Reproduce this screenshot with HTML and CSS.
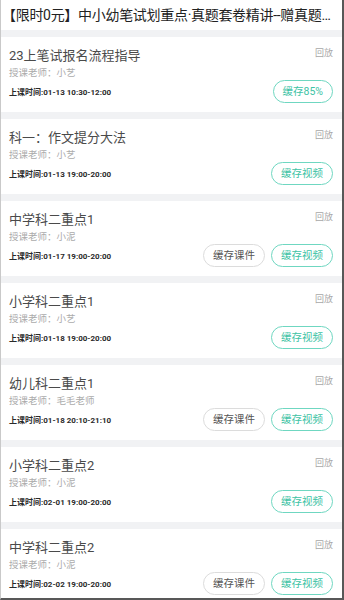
FILE: index.html
```html
<!DOCTYPE html>
<html lang="zh-CN">
<head>
<meta charset="utf-8">
<title>课程列表</title>
<link rel="stylesheet" href="styles.css">
</head>
<body>
<div class="frame">
  <header class="header">【限时0元】中小幼笔试划重点·真题套卷精讲--赠真题套卷电子版资料</header>
  <main class="list">
    <section class="card">
      <div class="top"><h2 class="title">23上笔试报名流程指导</h2><span class="tag">回放</span></div>
      <div class="teacher">授课老师：小艺</div>
      <div class="bottom"><span class="time">上课时间:01-13 10:30-12:00</span><div class="btns"><span class="btn btn-green">缓存85%</span></div></div>
    </section>
    <section class="card">
      <div class="top"><h2 class="title">科一：作文提分大法</h2><span class="tag">回放</span></div>
      <div class="teacher">授课老师：小艺</div>
      <div class="bottom"><span class="time">上课时间:01-13 19:00-20:00</span><div class="btns"><span class="btn btn-green">缓存视频</span></div></div>
    </section>
    <section class="card">
      <div class="top"><h2 class="title">中学科二重点1</h2><span class="tag">回放</span></div>
      <div class="teacher">授课老师：小泥</div>
      <div class="bottom"><span class="time">上课时间:01-17 19:00-20:00</span><div class="btns"><span class="btn btn-gray">缓存课件</span><span class="btn btn-green">缓存视频</span></div></div>
    </section>
    <section class="card">
      <div class="top"><h2 class="title">小学科二重点1</h2><span class="tag">回放</span></div>
      <div class="teacher">授课老师：小艺</div>
      <div class="bottom"><span class="time">上课时间:01-18 19:00-20:00</span><div class="btns"><span class="btn btn-green">缓存视频</span></div></div>
    </section>
    <section class="card">
      <div class="top"><h2 class="title">幼儿科二重点1</h2><span class="tag">回放</span></div>
      <div class="teacher">授课老师：毛毛老师</div>
      <div class="bottom"><span class="time">上课时间:01-18 20:10-21:10</span><div class="btns"><span class="btn btn-gray">缓存课件</span><span class="btn btn-green">缓存视频</span></div></div>
    </section>
    <section class="card">
      <div class="top"><h2 class="title">小学科二重点2</h2><span class="tag">回放</span></div>
      <div class="teacher">授课老师：小泥</div>
      <div class="bottom"><span class="time">上课时间:02-01 19:00-20:00</span><div class="btns"><span class="btn btn-green">缓存视频</span></div></div>
    </section>
    <section class="card">
      <div class="top"><h2 class="title">中学科二重点2</h2><span class="tag">回放</span></div>
      <div class="teacher">授课老师：小泥</div>
      <div class="bottom"><span class="time">上课时间:02-02 19:00-20:00</span><div class="btns"><span class="btn btn-gray">缓存课件</span><span class="btn btn-green">缓存视频</span></div></div>
    </section>
  </main>
</div>
</body>
</html>
```
FILE: styles.css
```css
* { box-sizing: border-box; }
html, body { margin: 0; padding: 0; }
body {
  font-family: Roboto, "Noto Sans CJK SC", sans-serif;
  background: #ffffff;
}
.frame {
  width: 344px;
  height: 600px;
  overflow: hidden;
  border-left: 1px solid #c9c9c9;
  border-right: 2px solid #585858;
  border-bottom: 2px solid #585858;
  background: #f1f2f4;
}
.header {
  height: 30px;
  background: #fff;
  line-height: 30px;
  font-size: 14px;
  letter-spacing: -0.3px;
  color: #222;
  white-space: nowrap;
  overflow: hidden;
  text-overflow: ellipsis;
  padding-right: 4px;
  padding-left: 1px;
}
.list {
  display: flex;
  flex-direction: column;
  gap: 7px;
  padding-top: 7px;
}
.card {
  flex: none;
  height: 75px;
  background: #fff;
  padding: 10px 9px 0 8px;
}
.top {
  display: flex;
  justify-content: space-between;
  align-items: flex-start;
  height: 18px;
}
.title {
  margin: 0;
  font-size: 13px;
  line-height: 18px;
  font-weight: 400;
  color: #4a4a4a;
}
.tag {
  font-size: 9px;
  line-height: 12px;
  color: #a8a8a8;
}
.teacher {
  margin-top: 2px;
  font-size: 9.5px;
  line-height: 12px;
  color: #ababab;
}
.bottom {
  margin-top: 1px;
  height: 23px;
  display: flex;
  justify-content: space-between;
  align-items: center;
}
.time {
  font-size: 8px;
  font-weight: 700;
  color: #2a2a2a;
}
.btns {
  display: flex;
  gap: 6px;
}
.btn {
  height: 23px;
  line-height: 21px;
  padding: 0 9px;
  border-radius: 12px;
  font-size: 10.5px;
  border: 1px solid #dcdcdc;
  color: #555;
  background: #fff;
}
.btn-green {
  border-color: #6fd7c1;
  color: #3ec3a5;
}
```
